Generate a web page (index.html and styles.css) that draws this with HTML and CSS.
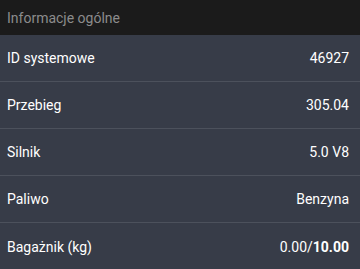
FILE: index.html
```html
<!DOCTYPE html>
<html lang="pl">
<head>
    <meta charset="UTF-8">
    <meta name="viewport" content="width=device-width, initial-scale=1.0">
    <title>Informacje ogólne</title>
    <link rel="stylesheet" href="styles.css">
</head>
<body>
    <div class="panel">
        <div class="panel-header">Informacje ogólne</div>
        <div class="info-list">
            <div class="info-row">
                <span class="info-label">ID systemowe</span>
                <span class="info-value">46927</span>
            </div>
            <div class="info-row">
                <span class="info-label">Przebieg</span>
                <span class="info-value">305.04</span>
            </div>
            <div class="info-row">
                <span class="info-label">Silnik</span>
                <span class="info-value">5.0 V8</span>
            </div>
            <div class="info-row">
                <span class="info-label">Paliwo</span>
                <span class="info-value">Benzyna</span>
            </div>
            <div class="info-row">
                <span class="info-label">Bagażnik (kg)</span>
                <span class="info-value">0.00/<b>10.00</b></span>
            </div>
        </div>
    </div>
</body>
</html>
```

FILE: styles.css
```css
* {
    margin: 0;
    padding: 0;
    box-sizing: border-box;
}

body {
    font-family: Roboto, 'Liberation Sans', sans-serif;
    background: #373c48;
    width: 360px;
    height: 269px;
    overflow: hidden;
}

.panel {
    display: flex;
    flex-direction: column;
}

.panel-header {
    height: 35px;
    background: #1b1b1b;
    color: #8c8c8c;
    font-size: 14px;
    padding: 0 7px;
    display: flex;
    align-items: center;
}

.info-row {
    height: 47px;
    display: flex;
    align-items: center;
    justify-content: space-between;
    padding: 0 11px 0 7px;
    border-bottom: 1px solid #4c515c;
    color: #ffffff;
    font-size: 14px;
}

.info-row:last-child {
    border-bottom: none;
}

.info-value b {
    font-weight: 700;
}
```
